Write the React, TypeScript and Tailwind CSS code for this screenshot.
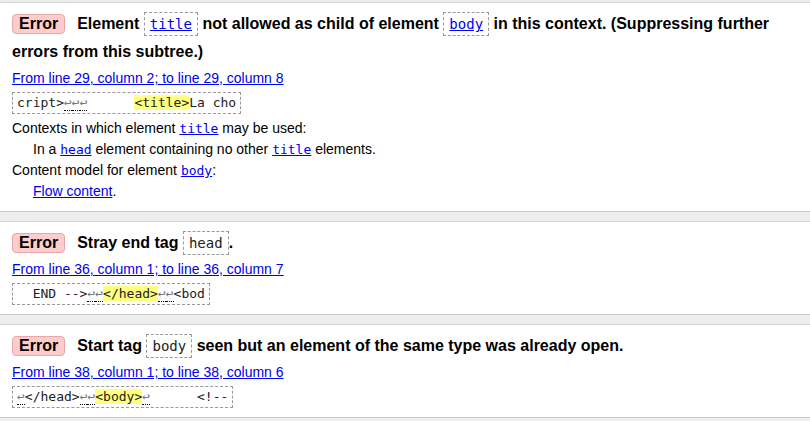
const mono = "font-['Consolas','DejaVu_Sans_Mono','Liberation_Mono',monospace]";

function Badge() {
  return (
    <span className="mr-[12px] inline-block rounded-[4px] border border-[#e6a8a8] bg-[#ffcccc] px-[6px] leading-[18px]">
      Error
    </span>
  );
}

function Code({ children, link = false }: { children: string; link?: boolean }) {
  return (
    <code
      className={`${mono} inline-block border border-dashed border-[#999] px-[5px] text-[14px] font-normal leading-[22px] ${
        link ? "text-[#0000ee] underline" : "text-[#222]"
      }`}
    >
      {children}
    </code>
  );
}

function Ret() {
  return <span className="border-b border-dotted border-black text-[#777]">↩</span>;
}

function Extract({ children }: { children: React.ReactNode }) {
  return (
    <div
      className={`${mono} mt-[4px] inline-block whitespace-pre border border-dashed border-[#999] px-[4px] text-[13px] leading-[20px] text-[#222]`}
    >
      {children}
    </div>
  );
}

function Mark({ children }: { children: string }) {
  return <span className="bg-[#ffff80]">{children}</span>;
}

function Loc({ children }: { children: string }) {
  return <a className="mt-[2px] block text-[14px] leading-[20px] text-[#0000ee] underline">{children}</a>;
}

function Card({ children }: { children: React.ReactNode }) {
  return (
    <li className="border-y border-t-[#d4d4d4] border-b-[#c8c8c8] bg-white px-[12px] pt-[7px] pb-[9px]">
      {children}
    </li>
  );
}

function A({ children }: { children: string }) {
  return <a className={`${mono} text-[13px] text-[#0000ee] underline`}>{children}</a>;
}

export default function App() {
  return (
    <div className="h-[421px] w-[810px] overflow-hidden bg-[#eeeeee] pt-[2px] font-['Liberation_Sans',Arial,sans-serif] text-black">
      <ol className="flex flex-col gap-[9px]">
        <Card>
          <p className="text-[16px] font-bold leading-[28px]">
            <Badge />
            Element <Code link>title</Code> not allowed as child of element <Code link>body</Code> in this context.
            (Suppressing further errors from this subtree.)
          </p>
          <Loc>From line 29, column 2; to line 29, column 8</Loc>
          <Extract>
            cript&gt;<Ret />
            <Ret />
            <Ret />
            {"      "}
            <Mark>&lt;title&gt;</Mark>La cho
          </Extract>
          <dl className="mt-[4px] text-[14px] leading-[21px]">
            <dt>
              Contexts in which element <A>title</A> may be used:
            </dt>
            <dd className="pl-[21px]">
              In a <A>head</A> element containing no other <A>title</A> elements.
            </dd>
            <dt>
              Content model for element <A>body</A>:
            </dt>
            <dd className="pl-[21px]">
              <a className="text-[#0000ee] underline">Flow content</a>.
            </dd>
          </dl>
        </Card>
        <Card>
          <p className="text-[16px] font-bold leading-[28px]">
            <Badge />
            Stray end tag <Code>head</Code>.
          </p>
          <Loc>From line 36, column 1; to line 36, column 7</Loc>
          <Extract>
            {"  END -->"}
            <Ret />
            <Ret />
            <Mark>&lt;/head&gt;</Mark>
            <Ret />
            <Ret />
            &lt;bod
          </Extract>
        </Card>
        <Card>
          <p className="text-[16px] font-bold leading-[28px]">
            <Badge />
            Start tag <Code>body</Code> seen but an element of the same type was already open.
          </p>
          <Loc>From line 38, column 1; to line 38, column 6</Loc>
          <Extract>
            <Ret />
            &lt;/head&gt;
            <Ret />
            <Ret />
            <Mark>&lt;body&gt;</Mark>
            <Ret />
            {"      <!--"}
          </Extract>
        </Card>
      </ol>
    </div>
  );
}
